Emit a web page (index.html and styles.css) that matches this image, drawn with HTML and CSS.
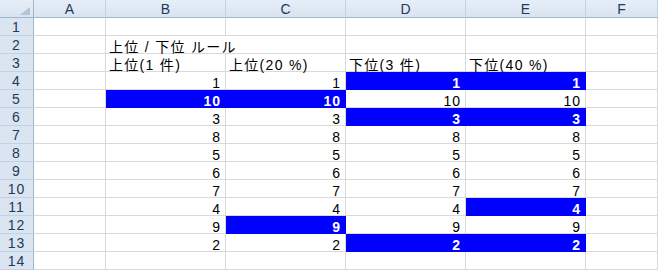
FILE: index.html
```html
<!DOCTYPE html>
<html lang="ja">
<head>
    <meta charset="utf-8">
    <title>上位 / 下位 ルール</title>
    <link rel="stylesheet" href="styles.css">
</head>
<body>
<div class="sheet">
    <div class="row head">
        <div class="corner"><svg width="10" height="8" viewBox="0 0 10 8"><polygon points="10,0 10,8 0,8" fill="#b4c4d8"/></svg></div>
        <div class="ch">A</div>
        <div class="ch">B</div>
        <div class="ch">C</div>
        <div class="ch">D</div>
        <div class="ch">E</div>
        <div class="ch">F</div>
    </div>
    <div class="row">
        <div class="rh">1</div>
        <div class="cell"></div><div class="cell"></div><div class="cell"></div><div class="cell"></div><div class="cell"></div><div class="cell"></div>
    </div>
    <div class="row">
        <div class="rh">2</div>
        <div class="cell"></div>
        <div class="cell wide">上位 / 下位 ルール</div>
        <div class="cell"></div><div class="cell"></div><div class="cell"></div>
    </div>
    <div class="row">
        <div class="rh">3</div>
        <div class="cell"></div>
        <div class="cell">上位(1 件)</div>
        <div class="cell">上位(20 %)</div>
        <div class="cell">下位(3 件)</div>
        <div class="cell">下位(40 %)</div>
        <div class="cell"></div>
    </div>
    <div class="row">
        <div class="rh">4</div>
        <div class="cell"></div>
        <div class="cell num">1</div>
        <div class="cell num">1</div>
        <div class="cell num hi">1</div>
        <div class="cell num hi">1</div>
        <div class="cell"></div>
    </div>
    <div class="row">
        <div class="rh">5</div>
        <div class="cell"></div>
        <div class="cell num hi">10</div>
        <div class="cell num hi">10</div>
        <div class="cell num">10</div>
        <div class="cell num">10</div>
        <div class="cell"></div>
    </div>
    <div class="row">
        <div class="rh">6</div>
        <div class="cell"></div>
        <div class="cell num">3</div>
        <div class="cell num">3</div>
        <div class="cell num hi">3</div>
        <div class="cell num hi">3</div>
        <div class="cell"></div>
    </div>
    <div class="row">
        <div class="rh">7</div>
        <div class="cell"></div>
        <div class="cell num">8</div>
        <div class="cell num">8</div>
        <div class="cell num">8</div>
        <div class="cell num">8</div>
        <div class="cell"></div>
    </div>
    <div class="row">
        <div class="rh">8</div>
        <div class="cell"></div>
        <div class="cell num">5</div>
        <div class="cell num">5</div>
        <div class="cell num">5</div>
        <div class="cell num">5</div>
        <div class="cell"></div>
    </div>
    <div class="row">
        <div class="rh">9</div>
        <div class="cell"></div>
        <div class="cell num">6</div>
        <div class="cell num">6</div>
        <div class="cell num">6</div>
        <div class="cell num">6</div>
        <div class="cell"></div>
    </div>
    <div class="row">
        <div class="rh">10</div>
        <div class="cell"></div>
        <div class="cell num">7</div>
        <div class="cell num">7</div>
        <div class="cell num">7</div>
        <div class="cell num">7</div>
        <div class="cell"></div>
    </div>
    <div class="row">
        <div class="rh">11</div>
        <div class="cell"></div>
        <div class="cell num">4</div>
        <div class="cell num">4</div>
        <div class="cell num">4</div>
        <div class="cell num hi">4</div>
        <div class="cell"></div>
    </div>
    <div class="row">
        <div class="rh">12</div>
        <div class="cell"></div>
        <div class="cell num">9</div>
        <div class="cell num hi">9</div>
        <div class="cell num">9</div>
        <div class="cell num">9</div>
        <div class="cell"></div>
    </div>
    <div class="row">
        <div class="rh">13</div>
        <div class="cell"></div>
        <div class="cell num">2</div>
        <div class="cell num">2</div>
        <div class="cell num hi">2</div>
        <div class="cell num hi">2</div>
        <div class="cell"></div>
    </div>
    <div class="row">
        <div class="rh">14</div>
        <div class="cell"></div><div class="cell"></div><div class="cell"></div><div class="cell"></div><div class="cell"></div><div class="cell"></div>
    </div>
</div>
</body>
</html>
```

FILE: styles.css
```css
body {
    margin: 0;
    background: #fff;
    font-family: "Liberation Sans", "Noto Sans CJK JP", sans-serif;
    font-size: 14px;
    color: #000;
}
.sheet {
    width: 658px;
}
.row {
    display: grid;
    grid-template-columns: 34px 72px 120px 120px 120px 120px 72px;
    height: 18px;
}
.cell {
    box-sizing: border-box;
    display: flex;
    align-items: flex-end;
    padding: 0 3px 0 3px;
    line-height: 12px;
    letter-spacing: 1.3px;
    white-space: nowrap;
    border-right: 1px solid #d9d9d9;
    border-bottom: 1px solid #d9d9d9;
}
.wide {
    grid-column: span 2;
}
.num {
    justify-content: flex-end;
    padding-right: 4px;
    letter-spacing: 1px;
}
.hi {
    background: #0000ff;
    color: #fff;
    font-weight: bold;
    border-color: #0000ff;
}
/* 見出し */
.head {
    background: linear-gradient(#e6eef8, #d8e3f0);
}
.corner {
    box-sizing: border-box;
    display: flex;
    align-items: flex-end;
    justify-content: flex-end;
    padding: 0 3px 2px 0;
    border-right: 1px solid #9eb6ce;
    border-bottom: 1px solid #9eb6ce;
}
.ch {
    box-sizing: border-box;
    display: flex;
    align-items: center;
    justify-content: center;
    font-size: 14px;
    color: #213a5c;
    border-right: 1px solid #c3d1e1;
    border-bottom: 1px solid #9eb6ce;
}
.rh {
    box-sizing: border-box;
    display: flex;
    align-items: center;
    justify-content: center;
    font-size: 14px;
    letter-spacing: 1px;
    color: #213a5c;
    background: #dbe5f1;
    border-right: 1px solid #9eb6ce;
    border-bottom: 1px solid #c3d1e1;
}
```
